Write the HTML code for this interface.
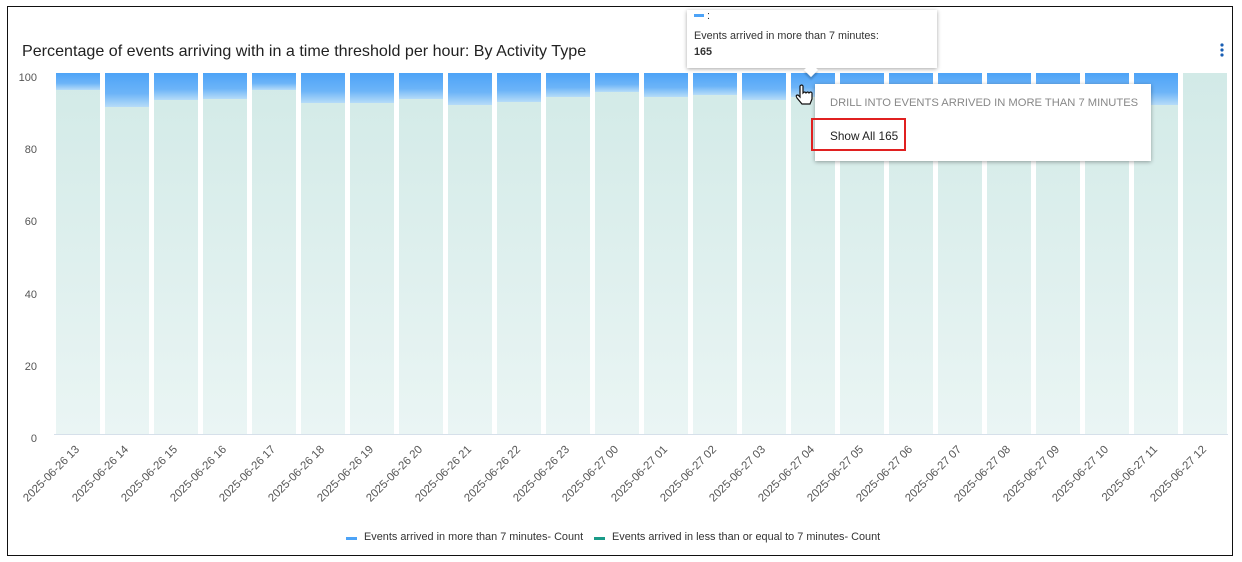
<!DOCTYPE html>
<html><head><meta charset="utf-8"><style>
body{margin:0;width:1242px;height:562px;background:#fff;font-family:"Liberation Sans",sans-serif;overflow:hidden;position:relative}
.frame{position:absolute;left:7px;top:6px;width:1226px;height:550px;border:1.5px solid #111;box-sizing:border-box}
.t{position:absolute;left:22px;top:42px;font-size:16.1px;color:#222}
.tip{position:absolute;left:687px;top:10px;width:250px;height:58px;background:#fff;box-shadow:0 1px 4px rgba(0,0,0,.35);font-size:10.8px;color:#333}
.pop{position:absolute;left:815px;top:84px;width:336px;height:77px;background:#fff;box-shadow:0 1px 4px rgba(0,0,0,.35)}
</style></head><body>
<div class="frame"></div>
<div class="t">Percentage of events arriving with in a time threshold per hour: By Activity Type</div>
<svg width="1242" height="562" style="position:absolute;left:0;top:0">
<defs>
<linearGradient id="g" x1="0" y1="0" x2="0" y2="1"><stop offset="0" stop-color="#d2eae7"/><stop offset="1" stop-color="#eaf5f4"/></linearGradient>
</defs>
<g font-size="11" fill="#555" text-anchor="end">
<text x="37" y="81">100</text><text x="37" y="153">80</text><text x="37" y="225">60</text><text x="37" y="298">40</text><text x="37" y="370">20</text><text x="37" y="442">0</text>
</g>
<line x1="54" y1="434.5" x2="1228" y2="434.5" stroke="#d6e0ea" stroke-width="1"/>
<g id="bars"></g>
<g id="labels" font-size="11.4" fill="#555" text-anchor="end"></g>
<g font-size="10.9" fill="#333">
<rect x="346" y="537" width="11" height="3" fill="#4da3f7"/><text x="364" y="540">Events arrived in more than 7 minutes- Count</text>
<rect x="594" y="537" width="11" height="3" fill="#1a9b88"/><text x="612" y="540">Events arrived in less than or equal to 7 minutes- Count</text>
</g>
<g fill="#1a5fb4"><circle cx="1222" cy="45" r="1.6"/><circle cx="1222" cy="50" r="1.6"/><circle cx="1222" cy="55" r="1.6"/></g>
</svg>
<div class="tip">
<div style="position:absolute;left:7px;top:4px;width:10px;height:3px;background:#4da3f7"></div>
<div style="position:absolute;left:20px;top:0px">:</div>
<div style="position:absolute;left:7px;top:20px">Events arrived in more than 7 minutes:</div>
<div style="position:absolute;left:7px;top:36px;font-weight:bold">165</div>
</div>
<div style="position:absolute;left:806px;top:65px;width:10px;height:10px;background:#fff;transform:rotate(45deg);box-shadow:2px 2px 2px rgba(0,0,0,.2)"></div>
<div class="pop">
<div style="position:absolute;left:15px;top:13px;font-size:11.2px;color:#888">DRILL INTO EVENTS ARRIVED IN MORE THAN 7 MINUTES</div>
<div style="position:absolute;left:15px;top:45px;font-size:11.8px;color:#222">Show All 165</div>
</div>
<div style="position:absolute;left:811px;top:118px;width:95px;height:33px;border:2px solid #e02020;box-sizing:border-box"></div>
<svg width="20" height="24" style="position:absolute;left:794px;top:84px" viewBox="0 0 20 24"><path d="M6 2 v11 l-2-2 q-3 0 -1 3 l5 6 h8 l2-5 v-6 q-1-2-3 0 q-1-2-3 0 q-1-2-3 0 v-7 q-1-2-3 0z" fill="#fff" stroke="#111" stroke-width="1.2"/></svg>
<script>
var b=[90,107,100,99,90,103,103,99,105,102,97,92,97,95,100,97,96,96,96,96,96,96,105,73];
var s='',l='';
for(var i=0;i<24;i++){var h=13+i;var d=h<24?'2025-06-26 '+h:'2025-06-27 '+String(h-24).padStart(2,'0');
var x=56+49*i,y=b[i];
s+='<rect x="'+x+'" y="73" width="44" height="361" fill="url(#g)"/>';
if(y>73){s+='<linearGradient id="b'+i+'" x1="0" y1="0" x2="0" y2="1"><stop offset="0" stop-color="#4da3f7"/><stop offset="0.6" stop-color="#6cb4f8"/><stop offset="1" stop-color="#b6dcf8"/></linearGradient><rect x="'+x+'" y="73" width="44" height="'+(y-73)+'" fill="url(#b'+i+')"/>';}
var cx=x+24;l+='<text x="'+cx+'" y="450" transform="rotate(-45 '+cx+' 450)">'+d+'</text>';}
document.getElementById('bars').innerHTML=s;document.getElementById('labels').innerHTML=l;
</script>
</body></html>
